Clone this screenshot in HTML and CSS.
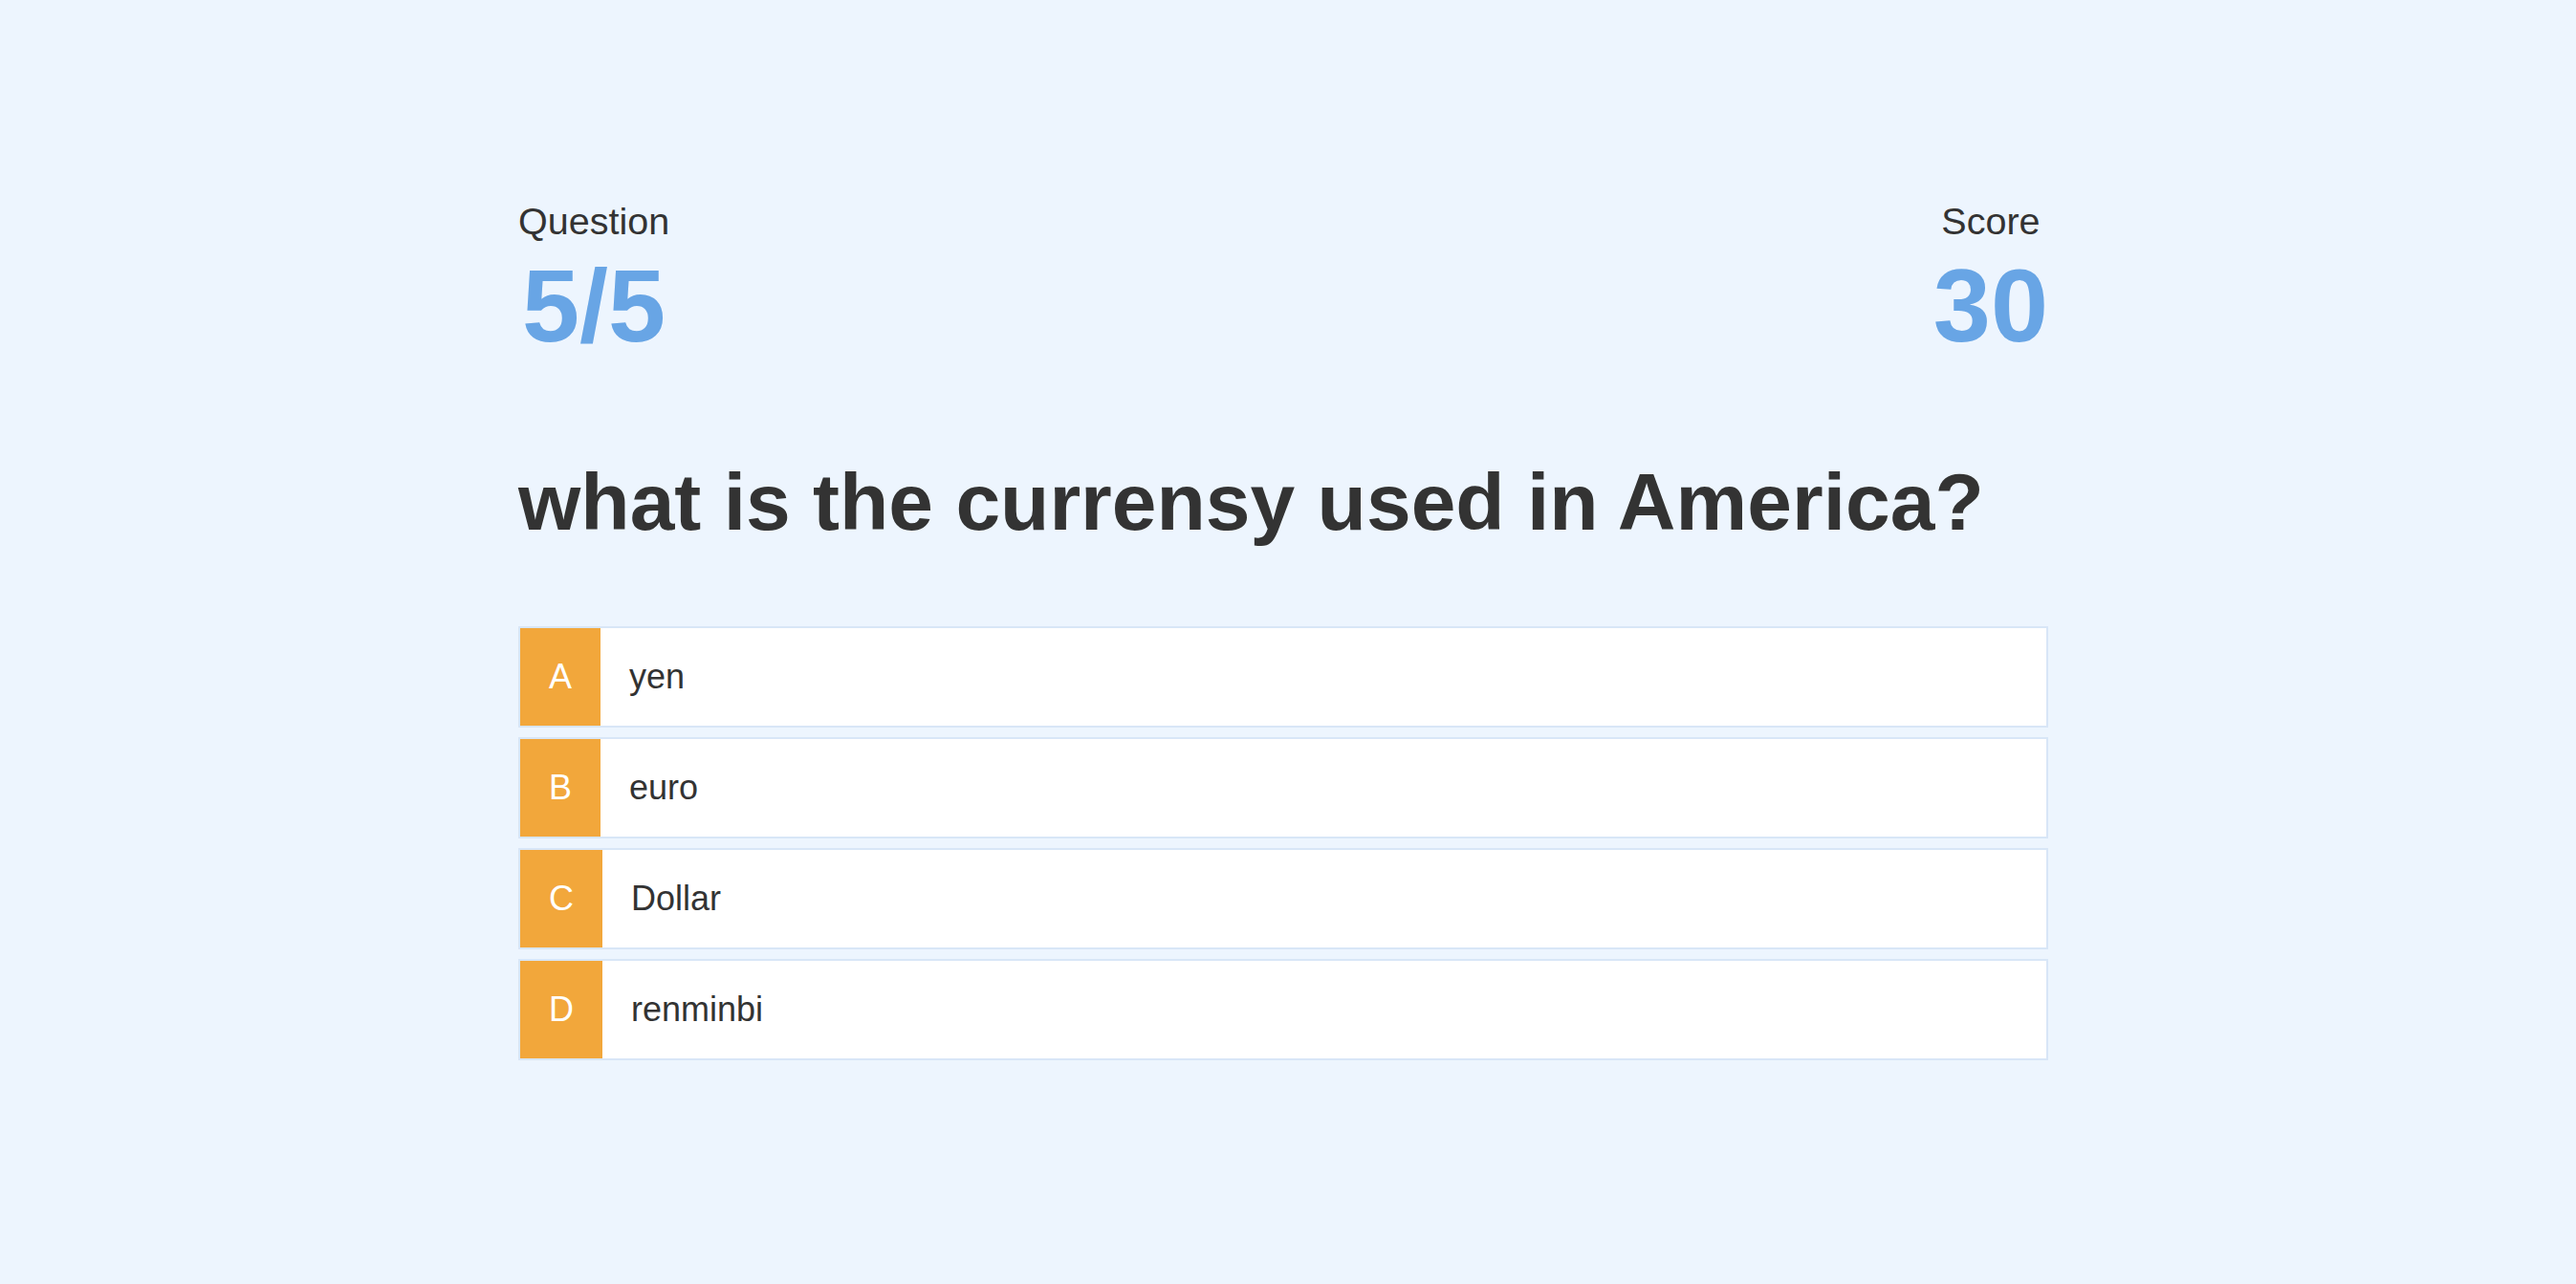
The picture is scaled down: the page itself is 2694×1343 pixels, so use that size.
FILE: index.html
```html
<!DOCTYPE html>
<html lang="en">
<head>
<meta charset="utf-8">
<title>Quiz</title>
<link rel="stylesheet" href="styles.css">
</head>
<body>
<div class="quiz">
  <div class="hud">
    <div class="stat">
      <p class="stat-label">Question</p>
      <p class="stat-value">5/5</p>
    </div>
    <div class="stat">
      <p class="stat-label">Score</p>
      <p class="stat-value">30</p>
    </div>
  </div>
  <h1 class="question">what is the currensy used in America?</h1>
  <div class="choices">
    <div class="choice"><span class="choice-prefix">A</span><span class="choice-text">yen</span></div>
    <div class="choice"><span class="choice-prefix">B</span><span class="choice-text">euro</span></div>
    <div class="choice"><span class="choice-prefix">C</span><span class="choice-text">Dollar</span></div>
    <div class="choice"><span class="choice-prefix">D</span><span class="choice-text">renminbi</span></div>
  </div>
</div>
</body>
</html>
```

FILE: styles.css
```css
html, body {
  margin: 0;
  padding: 0;
}
body {
  background: #edf5fe;
  color: #333333;
  font-family: "Liberation Sans", Arial, sans-serif;
  min-height: 1343px;
}
.quiz {
  width: 1600px;
  margin-left: calc(50% - 805px);
  padding-top: 209px;
}
.hud {
  display: flex;
  justify-content: space-between;
}
.stat {
  display: flex;
  flex-direction: column;
  align-items: center;
}
.stat-label {
  margin: 0;
  font-size: 39.5px;
  line-height: 45px;
  color: #333333;
}
.stat-value {
  margin: 11px 0 0;
  font-size: 108px;
  line-height: 110px;
  font-weight: 700;
  color: #68a5e5;
}
.question {
  margin: 100px 0 0;
  font-size: 84px;
  line-height: 100px;
  font-weight: 700;
  color: #333333;
}
.choices {
  margin-top: 80px;
  display: flex;
  flex-direction: column;
  gap: 10px;
}
.choice {
  display: flex;
  height: 102px;
  border: 2px solid #d8e6f7;
  background: #ffffff;
  font-size: 36px;
}
.choice-prefix {
  display: flex;
  align-items: center;
  padding: 0 30px;
  background: #f2a73b;
  color: #ffffff;
}
.choice-text {
  display: flex;
  align-items: center;
  padding-left: 30px;
  color: #333333;
}
```
